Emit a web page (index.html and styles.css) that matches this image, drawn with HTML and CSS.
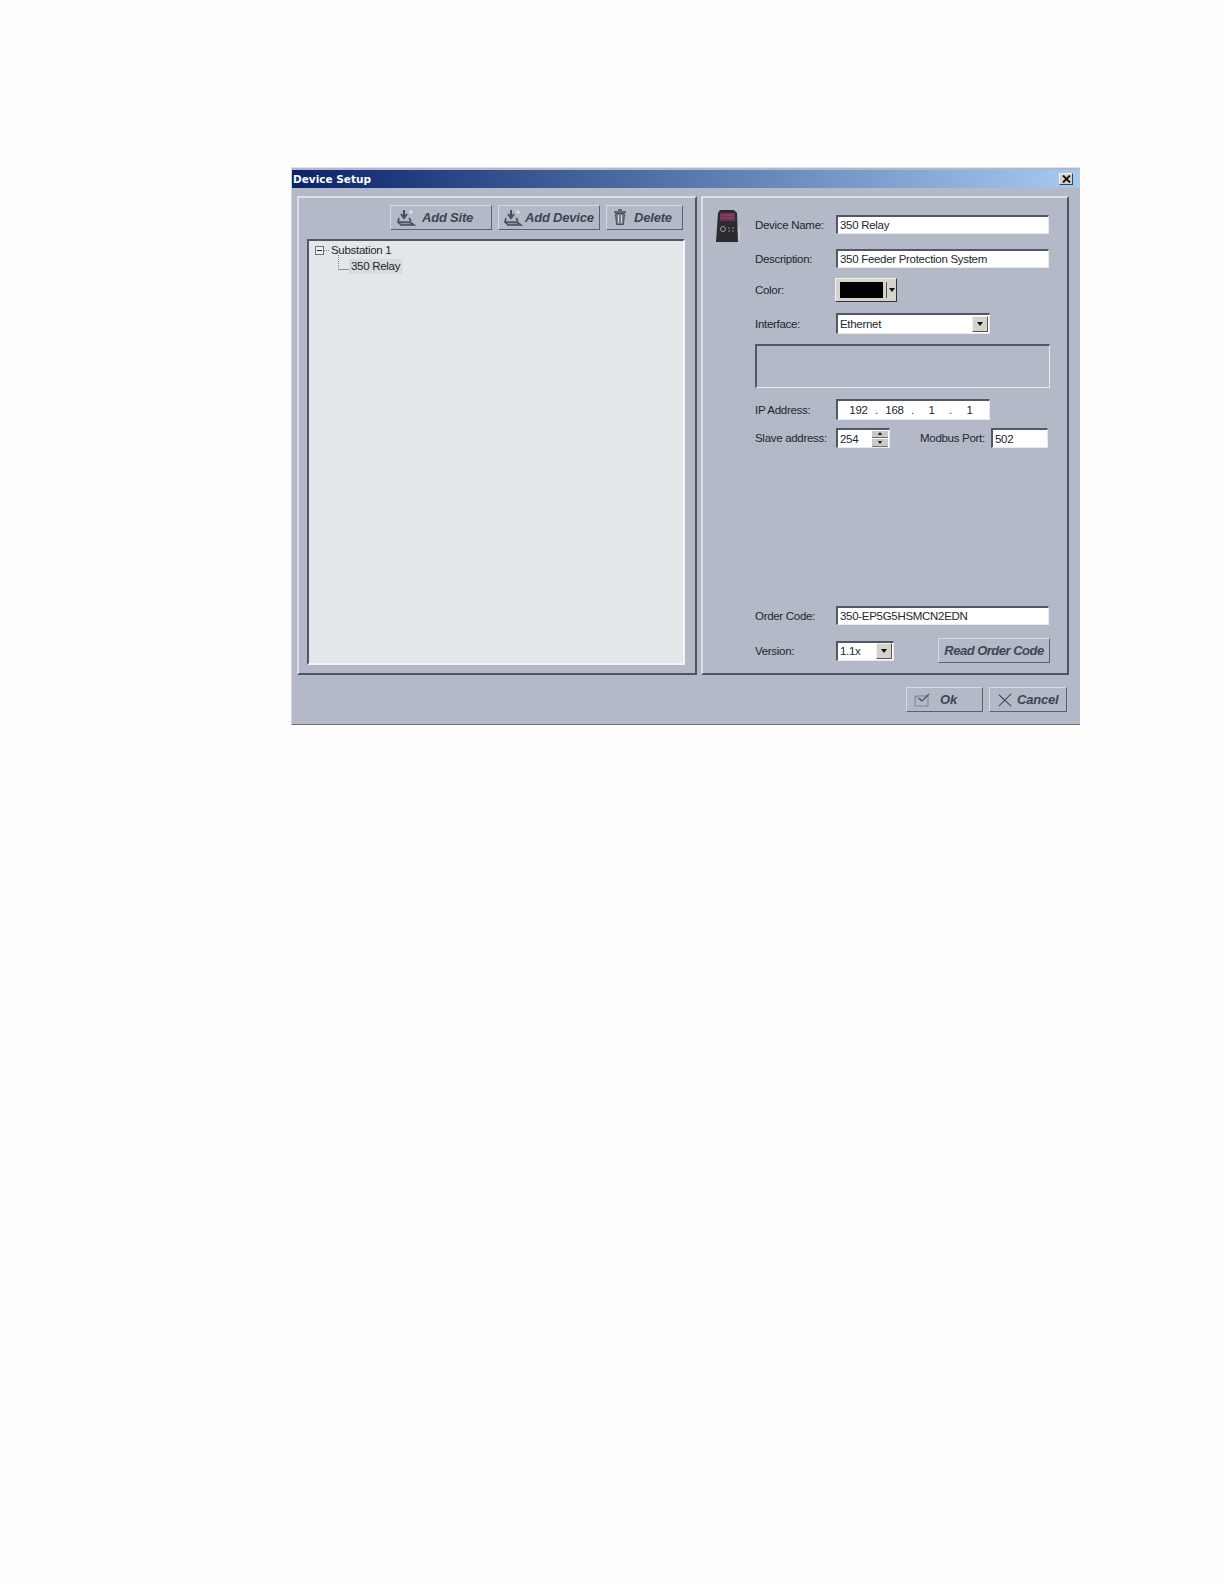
FILE: index.html
```html
<!DOCTYPE html>
<html lang="en">
<head>
<meta charset="utf-8">
<title>Device Setup</title>
<link rel="stylesheet" href="styles.css">
</head>
<body>
<div class="dialog">
  <div class="titlebar">
    <span class="title">Device Setup</span>
    <span class="close"><svg width="9" height="8" viewBox="0 0 9 8"><path d="M1 0.5 8 7.5M8 0.5 1 7.5" stroke="#111" stroke-width="1.8" fill="none"/></svg></span>
  </div>
  <div class="panels">
    <section class="panel left">
      <div class="toolbar">
        <button class="btn site"><svg class="ico" width="20" height="18" viewBox="0 0 20 18"><path d="M8 1v6M5 5l3 4 3-4" stroke="#454e5c" stroke-width="2" fill="none"/><path d="M3 9l-1 4h12l4 3H5L2 13M13 9l2 3" stroke="#454e5c" stroke-width="1.6" fill="#8b93a1"/><path d="M15 1v4M13 3h4" stroke="#e6e9ef" stroke-width="1"/></svg><span>Add Site</span></button>
        <button class="btn device"><svg class="ico" width="20" height="18" viewBox="0 0 20 18"><path d="M8 1v6M5 5l3 4 3-4" stroke="#454e5c" stroke-width="2" fill="none"/><path d="M3 9l-1 4h12l4 3H5L2 13M13 9l2 3" stroke="#454e5c" stroke-width="1.6" fill="#8b93a1"/><path d="M15 1v4M13 3h4" stroke="#e6e9ef" stroke-width="1"/></svg><span>Add Device</span></button>
        <button class="btn del"><svg class="ico" width="14" height="17" viewBox="0 0 14 17"><path d="M5 1h4M1 3h12" stroke="#454e5c" stroke-width="1.6"/><path d="M2.500 4.500h9l-1 11h-7z" fill="#737b89" stroke="#454e5c"/><path d="M5.500 6v8M8.500 6v8" stroke="#d3d7df"/></svg><span>Delete</span></button>
      </div>
      <div class="tree">
        <div class="node root"><span class="expander"><i></i></span><span class="dots"></span><span>Substation 1</span></div>
        <div class="node child"><span class="elbow"></span><span class="selected">350 Relay</span></div>
      </div>
    </section>
    <section class="panel right">
      <svg class="relay" width="24" height="32" viewBox="0 0 24 32">
        <rect x="17" y="17" width="7" height="13" fill="#c9cbc6"/>
        <path d="M4 0h14l3 3 1 29H0L2 3z" fill="#2b2b30"/>
        <rect x="4" y="3" width="15" height="8" fill="#6d3253"/>
        <path d="M5 5h13M5 8h13" stroke="#a9426d"/>
        <circle cx="7" cy="19" r="2.500" fill="none" stroke="#9b9ba3"/>
        <path d="M12 18h2M16 18h2M12 21h2M16 21h2" stroke="#8b8b92"/>
      </svg>
      <div class="form">
        <div class="row r-name"><label>Device Name:</label><div class="field wide">350 Relay</div></div>
        <div class="row r-desc"><label>Description:</label><div class="field wide">350 Feeder Protection System</div></div>
        <div class="row r-color"><label>Color:</label><div class="swatch"><b></b><em></em><span class="tri"></span></div></div>
        <div class="row r-iface"><label>Interface:</label><div class="field combo">Ethernet<span class="drop"><span class="tri"></span></span></div></div>
        <div class="group"></div>
        <div class="row r-ip"><label>IP Address:</label><div class="field ip"><span>192</span><i>.</i><span>168</span><i>.</i><span>1</span><i>.</i><span>1</span></div></div>
        <div class="row r-slave"><label>Slave address:</label><div class="field spin">254<span class="spinner"><span class="up"></span><span class="down"></span></span></div><label class="port-label">Modbus Port:</label><div class="field port">502</div></div>
        <div class="row r-order"><label>Order Code:</label><div class="field wide">350-EP5G5HSMCN2EDN</div></div>
        <div class="row r-version"><label>Version:</label><div class="field combo ver">1.1x<span class="drop"><span class="tri"></span></span></div><button class="btn read"><span>Read Order Code</span></button></div>
      </div>
    </section>
  </div>
  <div class="footer">
    <button class="btn ok"><svg class="ico" width="17" height="14" viewBox="0 0 17 14"><path d="M1 3h13v10H1z" fill="none" stroke="#7d8592"/><path d="M1 3l6.500 5L14 3" fill="none" stroke="#7d8592"/><path d="M5 5l3 3 7-7" fill="none" stroke="#59626f" stroke-width="1.500"/></svg><span>Ok</span></button>
    <button class="btn cancel"><svg class="ico" width="14" height="14" viewBox="0 0 16 16"><path d="M1 2l14 13M15 1 1 15" stroke="#454e5c" stroke-width="1.400" fill="none"/></svg><span>Cancel</span></button>
  </div>
</div>
</body>
</html>
```
FILE: styles.css
```css
* { box-sizing: border-box; }
html, body { margin: 0; padding: 0; background: #fefefe; }
body { height: 1584px; padding: 167px 0 0 291px; font-family: "Liberation Sans", Arial, sans-serif; font-size: 11.5px; letter-spacing: -0.3px; color: #23272e; white-space: nowrap; }

.dialog { width: 789px; height: 558px; padding-top: 2px; background: #b3b9c7; border-top: 1px solid #dfe1e6; border-left: 1px solid #cfd3da; border-bottom: 1px solid #6d6f74; display: flex; flex-direction: column; }

.titlebar { height: 18px; padding: 0 7px 1px 1px; display: flex; align-items: center; justify-content: space-between; background: linear-gradient(90deg, #0a246a, #a6caf0); }
.title { font: bold 10.5px "DejaVu Sans", sans-serif; letter-spacing: 0; color: #fff; }
.close { width: 14px; height: 12px; display: flex; align-items: center; justify-content: center; background: #d4d0c8; border: 1px solid; border-color: #f4f3ef #404040 #404040 #f4f3ef; }

.panels { display: flex; gap: 4px; margin: 8px 0 0 5px; height: 479px; }
.panel { border: 2px solid; border-color: #dbe0e8 #4b5564 #4b5564 #dbe0e8; }
.left { width: 400px; padding: 7px 10px 8px 8px; display: flex; flex-direction: column; }
.right { width: 368px; padding: 12px 0 0 13px; display: flex; }

.toolbar { display: flex; justify-content: flex-end; gap: 6px; padding-right: 2px; }
.btn { height: 25px; padding: 0; margin: 0; display: flex; align-items: center; background: #b3b9c7; border: 1px solid; border-color: #d5d9e1 #59626f #59626f #d5d9e1; font: italic bold 13px "Liberation Sans", Arial, sans-serif; letter-spacing: -0.2px; color: #3d4654; white-space: nowrap; }
.site { width: 102px; }
.site .ico { margin: 0 6px 0 5px; }
.device { width: 102px; }
.device .ico { margin: 0 2px 0 4px; }
.del { width: 77px; }
.del .ico { margin: 0 7px 0 6px; }

.tree { flex: 1; margin-top: 9px; padding: 1px 0 0 6px; background: #e4e7e9; border: 2px solid; border-color: #4f5868 #f2f4f7 #f2f4f7 #4f5868; }
.node { display: flex; align-items: center; height: 16px; }
.expander { width: 9px; height: 9px; border: 1px solid #6c7078; background: #eef0f1; display: flex; align-items: center; justify-content: center; }
.expander i { width: 5px; height: 1px; background: #222; }
.dots { width: 5px; margin-right: 2px; border-top: 1px dotted #7c8087; }
.child { padding-left: 23px; }
.elbow { width: 11px; height: 15px; margin-top: -8px; border-left: 1px dotted #7c8087; border-bottom: 1px solid #8a8e95; }
.selected { height: 15px; padding: 0 2px; background: #d8dadc; line-height: 15px; width: 53px; }

.relay { flex: none; margin-right: 15px; }
.form { width: 295px; display: flex; flex-direction: column; padding-top: 5px; }
.row { display: flex; align-items: center; }
.row label { width: 81px; flex: none; }
.field { height: 100%; padding-left: 2px; background: #fff; border: 2px solid; border-color: #4f5868 #e6eaf0 #e6eaf0 #4f5868; border-width: 2px 1px 1px 2px; line-height: 16px; display: flex; align-items: center; }
.wide { width: 213px; }

.r-name { height: 19px; }
.r-desc { height: 19px; margin-top: 15px; }
.r-color { height: 24px; margin-top: 10px; }
.r-iface { height: 21px; margin-top: 11px; }
.group { height: 44px; margin-top: 10px; border: 2px solid; border-color: #4f5868 #e6eaf0 #e6eaf0 #4f5868; border-width: 2px 1px 1px 2px; }
.r-ip { height: 21px; margin-top: 11px; }
.r-slave { height: 20px; margin-top: 8px; }
.r-order { height: 19px; margin-top: 158px; }
.r-version { height: 25px; margin-top: 13px; }

.swatch { width: 62px; height: 24px; margin-left: -1px; display: flex; align-items: center; padding-left: 4px; background: #d4d3cc; border: 1px solid; border-color: #f2f2ee #30343a #30343a #f2f2ee; }
.swatch b { width: 43px; height: 16px; background: #000; }
.swatch em { width: 1px; height: 16px; margin: 0 2px 0 3px; background: #555; }
.tri { display: block; width: 0; height: 0; border: 3px solid transparent; border-top: 4px solid #111; border-bottom: 0; }

.combo { width: 154px; justify-content: space-between; padding-right: 1px; }
.drop { width: 16px; height: 16px; display: flex; align-items: center; justify-content: center; background: #d4d3cc; border: 1px solid; border-color: #f2f2ee #555 #555 #f2f2ee; }
.ver { width: 58px; height: 20px; flex: none; }
.read { width: 112px; margin-left: 44px; justify-content: center; flex: none; letter-spacing: -0.5px; }

.ip { width: 154px; padding-left: 8px; }
.ip span { width: 25px; text-align: center; }
.ip i { width: 11px; font-style: normal; text-align: center; }
.ip span:nth-of-type(3), .ip span:nth-of-type(4) { width: 15px; }
.ip span:nth-of-type(3) { margin-left: 6px; margin-right: 6px; }
.ip span:nth-of-type(4) { margin-left: 6px; }

.spin { width: 54px; flex: none; justify-content: space-between; padding-right: 1px; }
.spinner { width: 16px; height: 16px; display: flex; flex-direction: column; gap: 1px; }
.spinner span { flex: 1; display: flex; align-items: center; justify-content: center; background: #c9c9c4; border-bottom: 1px solid #6d7078; }
.spinner .up::after { content: ""; border: 2px solid transparent; border-bottom: 3px solid #111; border-top: 0; }
.spinner .down::after { content: ""; border: 2px solid transparent; border-top: 3px solid #111; border-bottom: 0; }
.row .port-label { width: 71px; margin-left: 30px; }
.port { width: 57px; flex: none; }

.footer { display: flex; justify-content: flex-end; gap: 6px; margin-top: 12px; padding-right: 13px; }
.ok { width: 77px; }
.ok .ico { margin: 0 9px 0 7px; }
.cancel { width: 78px; }
.cancel .ico { margin: 0 5px 0 8px; }
```
